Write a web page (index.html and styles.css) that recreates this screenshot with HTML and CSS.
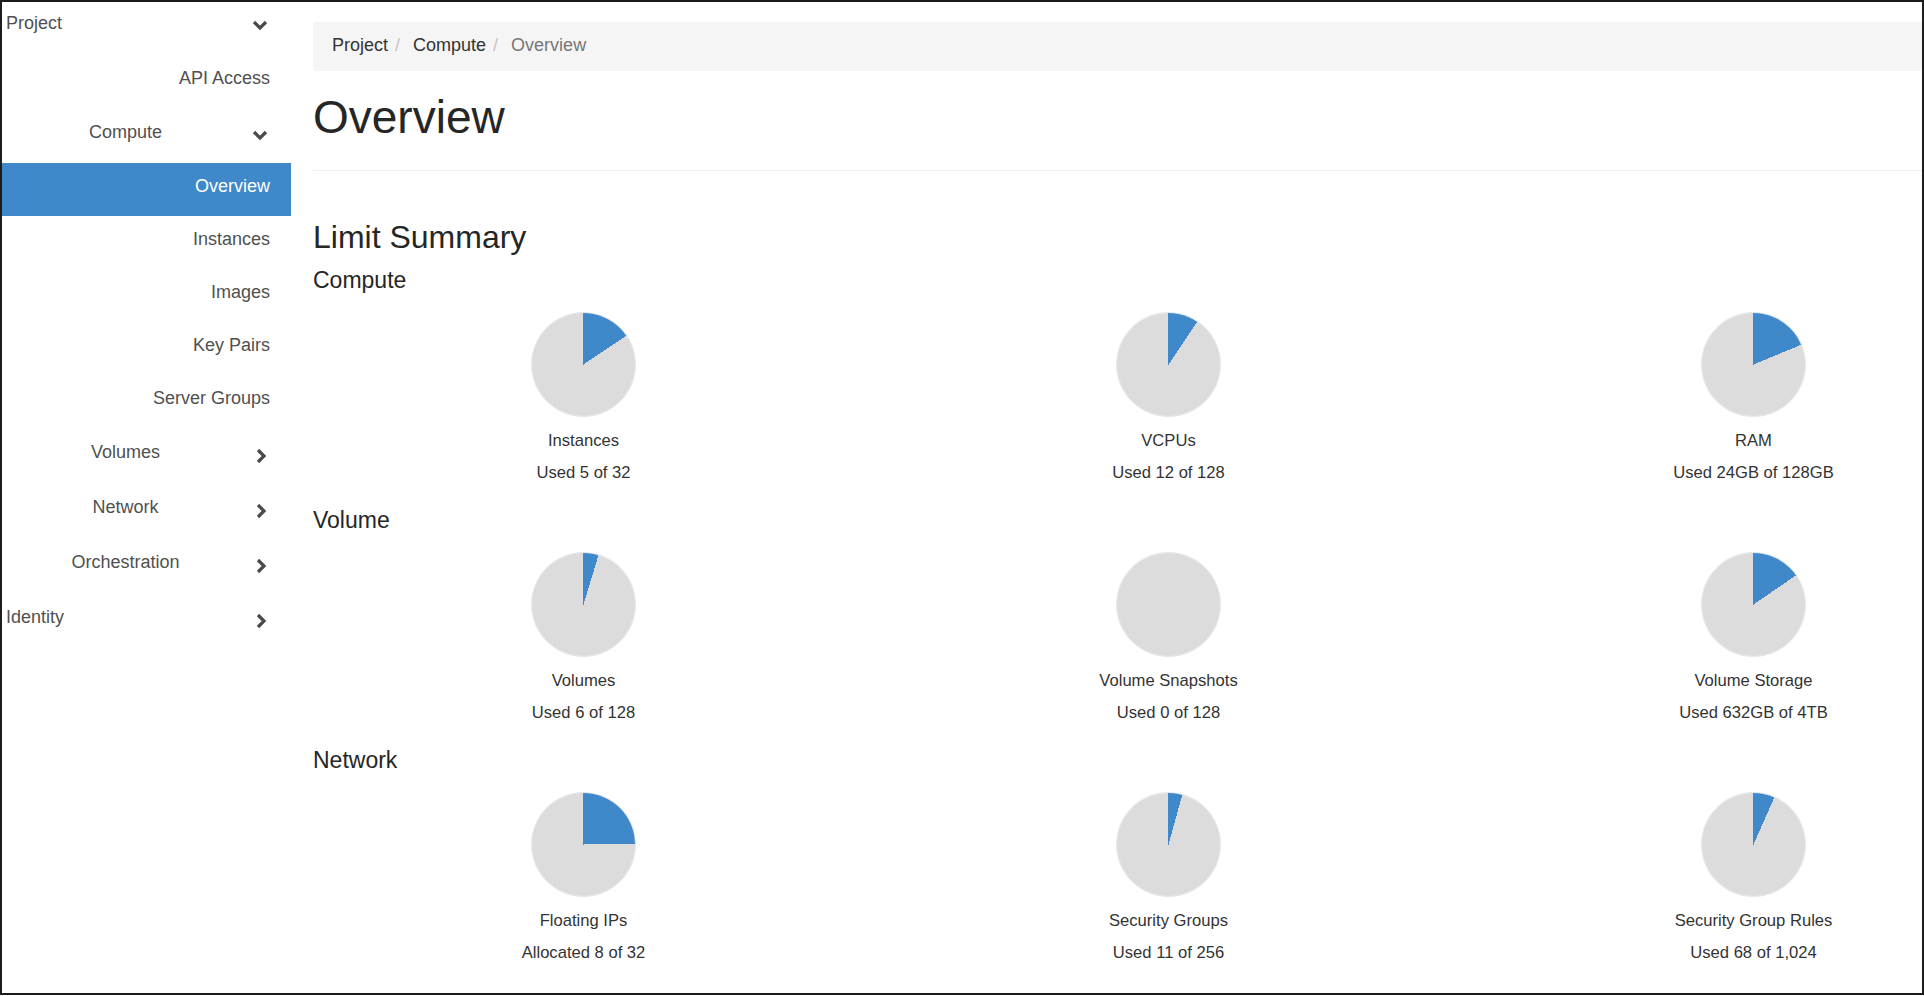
FILE: index.html
```html
<!DOCTYPE html>
<html lang="en">
<head>
    <meta charset="UTF-8">
    <meta name="viewport" content="width=device-width, initial-scale=1.0">
    <title>Overview - Compute</title>
    <link rel="stylesheet" href="styles.css">
</head>
<body>
    <div class="frame">
        <nav class="sidebar">
            <div class="nav-row nav-top nav-first">
                <span class="nav-label">Project</span>
                <svg class="chev" viewBox="0 0 16 16"><polyline points="2,4 8,10 14,4"/></svg>
            </div>
            <a class="nav-row nav-item" href="#">API Access</a>
            <div class="nav-row nav-group">
                <span class="nav-label">Compute</span>
                <svg class="chev" viewBox="0 0 16 16"><polyline points="2,4 8,10 14,4"/></svg>
            </div>
            <a class="nav-row nav-item active" href="#">Overview</a>
            <a class="nav-row nav-item" href="#">Instances</a>
            <a class="nav-row nav-item" href="#">Images</a>
            <a class="nav-row nav-item" href="#">Key Pairs</a>
            <a class="nav-row nav-item" href="#">Server Groups</a>
            <div class="nav-row nav-group">
                <span class="nav-label">Volumes</span>
                <svg class="chev" viewBox="0 0 16 16"><polyline points="6,2 12,8 6,14"/></svg>
            </div>
            <div class="nav-row nav-group">
                <span class="nav-label">Network</span>
                <svg class="chev" viewBox="0 0 16 16"><polyline points="6,2 12,8 6,14"/></svg>
            </div>
            <div class="nav-row nav-group">
                <span class="nav-label">Orchestration</span>
                <svg class="chev" viewBox="0 0 16 16"><polyline points="6,2 12,8 6,14"/></svg>
            </div>
            <div class="nav-row nav-top">
                <span class="nav-label">Identity</span>
                <svg class="chev" viewBox="0 0 16 16"><polyline points="6,2 12,8 6,14"/></svg>
            </div>
        </nav>

        <main class="main">
            <ol class="breadcrumb">
                <li>Project</li>
                <li>Compute</li>
                <li class="current">Overview</li>
            </ol>

            <div class="page-header">
                <h1>Overview</h1>
            </div>

            <h2 class="summary-title">Limit Summary</h2>

            <section class="limit-section">
                <h3>Compute</h3>
                <div class="pie-grid">
                    <div class="pie-item">
                        <div class="pie" style="--used: 15.63"></div>
                        <div class="pie-name">Instances</div>
                        <div class="pie-usage">Used 5 of 32</div>
                    </div>
                    <div class="pie-item">
                        <div class="pie" style="--used: 9.38"></div>
                        <div class="pie-name">VCPUs</div>
                        <div class="pie-usage">Used 12 of 128</div>
                    </div>
                    <div class="pie-item">
                        <div class="pie" style="--used: 18.75"></div>
                        <div class="pie-name">RAM</div>
                        <div class="pie-usage">Used 24GB of 128GB</div>
                    </div>
                </div>
            </section>

            <section class="limit-section">
                <h3>Volume</h3>
                <div class="pie-grid">
                    <div class="pie-item">
                        <div class="pie" style="--used: 4.69"></div>
                        <div class="pie-name">Volumes</div>
                        <div class="pie-usage">Used 6 of 128</div>
                    </div>
                    <div class="pie-item">
                        <div class="pie" style="--used: 0"></div>
                        <div class="pie-name">Volume Snapshots</div>
                        <div class="pie-usage">Used 0 of 128</div>
                    </div>
                    <div class="pie-item">
                        <div class="pie" style="--used: 15.43"></div>
                        <div class="pie-name">Volume Storage</div>
                        <div class="pie-usage">Used 632GB of 4TB</div>
                    </div>
                </div>
            </section>

            <section class="limit-section">
                <h3>Network</h3>
                <div class="pie-grid">
                    <div class="pie-item">
                        <div class="pie" style="--used: 25"></div>
                        <div class="pie-name">Floating IPs</div>
                        <div class="pie-usage">Allocated 8 of 32</div>
                    </div>
                    <div class="pie-item">
                        <div class="pie" style="--used: 4.3"></div>
                        <div class="pie-name">Security Groups</div>
                        <div class="pie-usage">Used 11 of 256</div>
                    </div>
                    <div class="pie-item">
                        <div class="pie" style="--used: 6.64"></div>
                        <div class="pie-name">Security Group Rules</div>
                        <div class="pie-usage">Used 68 of 1,024</div>
                    </div>
                </div>
            </section>
        </main>
    </div>
</body>
</html>
```

FILE: styles.css
```css
body {
    margin: 0;
    font-family: "Liberation Sans", Arial, sans-serif;
    color: #333;
    background-color: white;
    overflow: hidden;
}
.frame {
    display: flex;
    width: 1924px;
    height: 995px;
    border: 2px solid #1c1c1c;
    box-sizing: border-box;
    overflow: hidden;
}

/* sidebar */
.sidebar {
    width: 289px;
    flex-shrink: 0;
    font-size: 18px;
}
.nav-row {
    display: flex;
    align-items: center;
    height: 55px;
    padding-bottom: 7px;
    box-sizing: border-box;
    color: #505050;
    text-decoration: none;
}
.nav-first {
    height: 53px;
    padding-bottom: 11px;
}
.nav-first .chev {
    margin-top: 5px;
}
.nav-label {
    flex: 1;
}
.nav-top {
    padding-left: 4px;
    padding-right: 23px;
}
.nav-group {
    padding-right: 23px;
}
.nav-group .nav-label {
    text-align: center;
    margin-right: 3px;
}
.nav-item {
    height: 53px;
    justify-content: flex-end;
    padding-right: 21px;
}
.nav-item.active {
    background-color: #3f88c9;
    color: white;
}
.chev {
    width: 16px;
    height: 16px;
    margin-top: 7px;
    fill: none;
    stroke: #4a4a4a;
    stroke-width: 3.2;
}

/* main */
.main {
    flex: 1;
    padding-left: 22px;
}
.breadcrumb {
    display: flex;
    align-items: center;
    list-style: none;
    margin: 20px 0 0;
    height: 49px;
    padding: 0 0 3px 19px;
    box-sizing: border-box;
    background-color: #f5f5f5;
    border-radius: 4px 0 0 4px;
    font-size: 18px;
}
.breadcrumb li + li::before {
    content: "/\00a0";
    padding: 0 8px 0 7px;
    color: #c4c4c4;
}
.breadcrumb .current {
    color: #777;
}
.page-header {
    border-bottom: 1px solid #eee;
    padding-bottom: 29px;
}
h1, h2, h3 {
    font-weight: normal;
    color: #262626;
    margin: 0;
}
h1 {
    margin-top: 22px;
    font-size: 46px;
    line-height: 48px;
}
.summary-title {
    margin-top: 50px;
    font-size: 32px;
    line-height: 32px;
}
.limit-section {
    padding-top: 15px;
    padding-bottom: 10px;
}
.limit-section h3 {
    font-size: 23px;
    line-height: 24px;
}
.pie-grid {
    display: grid;
    grid-template-columns: repeat(3, 585px);
    margin-left: -22px;
    margin-top: 21px;
}
.pie-item {
    display: flex;
    flex-direction: column;
    align-items: center;
    font-size: 16.6px;
    line-height: 20px;
    color: #333;
}
.pie {
    width: 103px;
    height: 103px;
    border-radius: 50%;
    background: conic-gradient(#3f88c9 0 calc(var(--used) * 1%), #dcdcdc 0);
    box-shadow: 0 0 0 1px #e6e6e6;
}
.pie-name {
    margin-top: 15px;
}
.pie-usage {
    margin-top: 12px;
}
```
